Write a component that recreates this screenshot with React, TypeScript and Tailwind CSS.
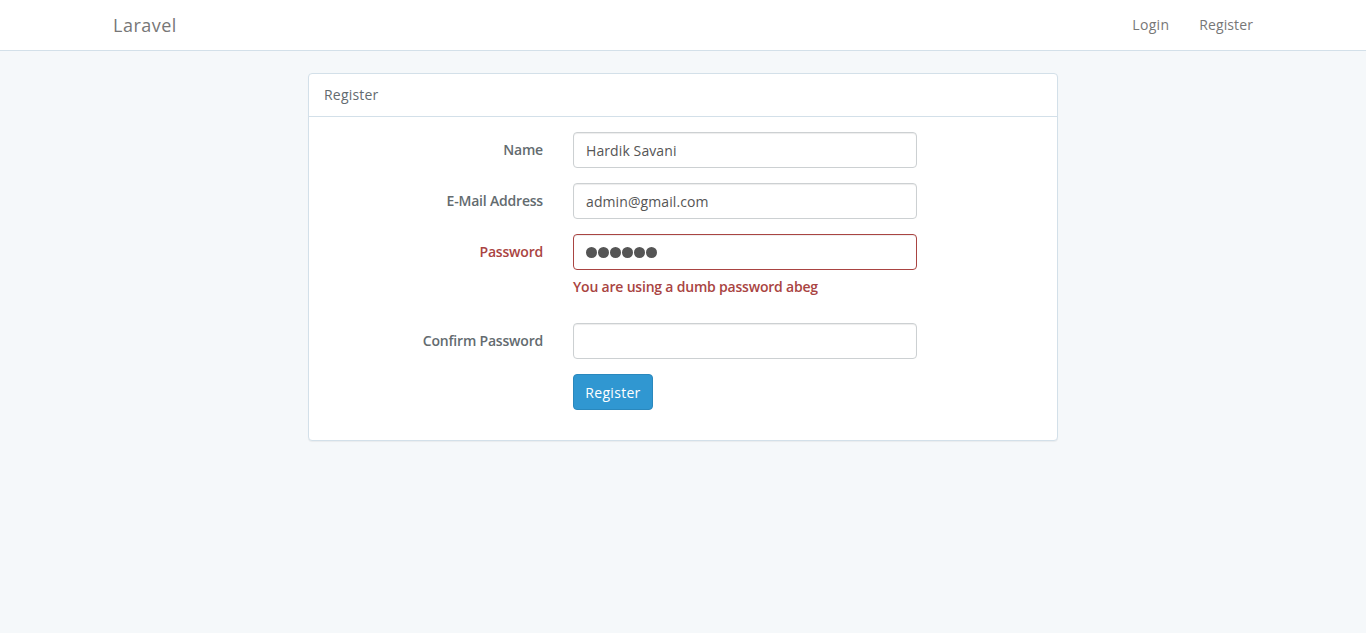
import React from "react";

const font = { fontFamily: '"Open Sans", "Noto Sans", sans-serif' };

function Row({
  label,
  children,
  error,
}: {
  label: string;
  children: React.ReactNode;
  error?: boolean;
}) {
  return (
    <div className="flex mb-[15px]">
      <label
        className={`w-[250px] px-[15px] pt-[7px] text-right text-[14px] leading-[22px] font-semibold tracking-[-0.2px] ${
          error ? "text-[#a94442]" : "text-[#636b6f]"
        }`}
      >
        {label}
      </label>
      <div className="w-[375px] px-[15px]">{children}</div>
    </div>
  );
}

function Input({ value, error, type = "text" }: { value: string; error?: boolean; type?: string }) {
  return (
    <input
      type={type}
      readOnly
      defaultValue={value}
      className={`block w-[344px] h-[36px] px-[12px] py-[6px] rounded-[4px] border bg-white text-[14px] text-[#555555] tracking-[0.1px] outline-none shadow-[inset_0_1px_1px_rgba(0,0,0,0.075)] ${
        error ? "border-[#a94442]" : "border-[#ccd0d2]"
      }`}
      style={font}
    />
  );
}

export default function App() {
  return (
    <div className="min-h-[633px] bg-[#f5f8fa] text-[#636b6f] text-[14px]" style={font}>
      <nav className="h-[51px] bg-white border-b border-[#d3e0e9]">
        <div className="max-w-[1170px] mx-auto px-[15px] flex items-center justify-between h-[50px]">
          <span className="text-[18px] text-[#777777] tracking-[0.5px]">Laravel</span>
          <div className="flex -mr-[15px] text-[14px] text-[#777777]">
            <span className="px-[15px] leading-[50px] tracking-[0.3px]">Login</span>
            <span className="px-[15px] leading-[50px] tracking-[0.1px]">Register</span>
          </div>
        </div>
      </nav>

      <div className="max-w-[1170px] mx-auto mt-[22px] flex">
        <div className="ml-[210px] w-[750px] bg-white border border-[#d3e0e9] rounded-[4px] shadow-[0_1px_1px_rgba(0,0,0,0.05)]">
          <div className="px-[15px] py-[10px] border-b border-[#d3e0e9] text-[14px] leading-[22px] text-[#636b6f] tracking-[0.2px]">
            Register
          </div>
          <div className="py-[15px] -mx-[1px]">
            <Row label="Name">
              <Input value="Hardik Savani" />
            </Row>
            <Row label="E-Mail Address">
              <Input value="admin@gmail.com" />
            </Row>
            <Row label="Password" error>
              <div className="flex items-center w-[344px] h-[36px] px-[12px] rounded-[4px] border border-[#a94442] bg-white shadow-[inset_0_1px_1px_rgba(0,0,0,0.075)]">
                <span className="flex gap-[1px]">
                  {[0, 1, 2, 3, 4, 5].map((i) => (
                    <span key={i} className="block w-[11px] h-[11px] rounded-full bg-[#555555]" />
                  ))}
                </span>
              </div>
              <div className="mt-[5px] mb-[10px] text-[14px] leading-[23px] font-semibold text-[#a94442] tracking-[-0.2px]">
                You are using a dumb password abeg
              </div>
            </Row>
            <Row label="Confirm Password">
              <Input value="" type="password" />
            </Row>
            <div className="flex mb-[15px]">
              <div className="w-[250px]" />
              <div className="px-[15px]">
                <button
                  className="h-[36px] w-[80px] rounded-[4px] border border-[#2a88bd] bg-[#3097d1] text-white text-[14px] tracking-[0.3px]"
                  style={font}
                >
                  Register
                </button>
              </div>
            </div>
          </div>
        </div>
      </div>
    </div>
  );
}
